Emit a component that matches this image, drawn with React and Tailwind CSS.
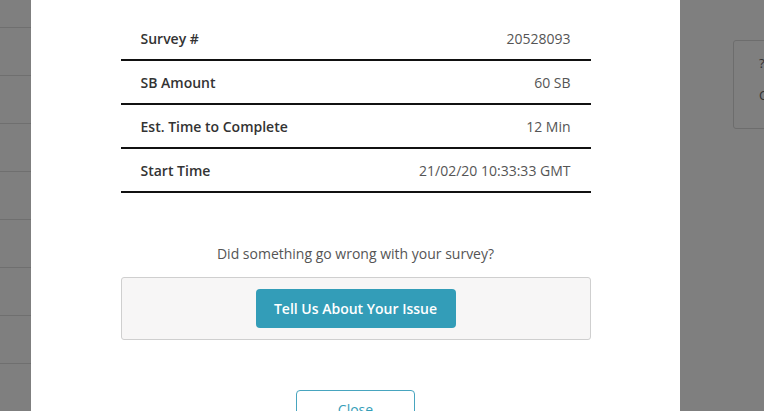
import React from "react";

const rows = [
  ["Survey #", "20528093"],
  ["SB Amount", "60 SB"],
  ["Est. Time to Complete", "12 Min"],
  ["Start Time", "21/02/20 10:33:33 GMT"],
];

export default function App() {
  return (
    <div
      className="flex h-[411px] w-[764px] overflow-hidden bg-[#7f7f7f]"
      style={{ fontFamily: '"Open Sans", sans-serif' }}
    >
      <div className="flex w-[31px] shrink-0 flex-col pt-[27px]">
        {[0, 1, 2, 3, 4, 5, 6, 7].map((i) => (
          <div key={i} className="h-[48px] shrink-0 border-t border-[#6f6f6f]" />
        ))}
      </div>
      <div className="flex w-[649px] shrink-0 flex-col items-center bg-white pt-[17px]">
        <div className="w-[470px]">
          {rows.map(([k, v]) => (
            <div
              key={k}
              className="flex h-[44px] items-center justify-between border-b-2 border-[#111] px-[20px] pt-[1px] text-[14px]"
            >
              <span className="font-semibold text-[#333]">{k}</span>
              <span className="text-[#555]">{v}</span>
            </div>
          ))}
        </div>
        <p className="mt-[50px] text-[14px] text-[#555]">Did something go wrong with your survey?</p>
        <div className="mt-[13px] flex h-[63px] w-[470px] shrink-0 items-center justify-center rounded-[3px] border border-[#cfcfcf] bg-[#f7f6f6]">
          <button className="h-[39px] w-[200px] rounded-[4px] bg-[#339db8] text-[14px] font-semibold text-white">
            Tell Us About Your Issue
          </button>
        </div>
        <button className="mt-[50px] h-[40px] w-[119px] shrink-0 rounded-[4px] border border-[#48a5bf] pb-[2px] text-[14px] text-[#339db8]">
          Close
        </button>
      </div>
      <div className="flex flex-1 flex-col pt-[40px] pl-[53px]">
        <div className="flex h-[89px] w-[60px] flex-col items-start rounded-[3px] border border-[#6d6d6d] pl-[25px] pt-[12px] text-[13px] text-[#333]">
          <span className="leading-[20px]">?</span>
          <span className="mt-[12px] leading-[20px]">C</span>
        </div>
      </div>
    </div>
  );
}
